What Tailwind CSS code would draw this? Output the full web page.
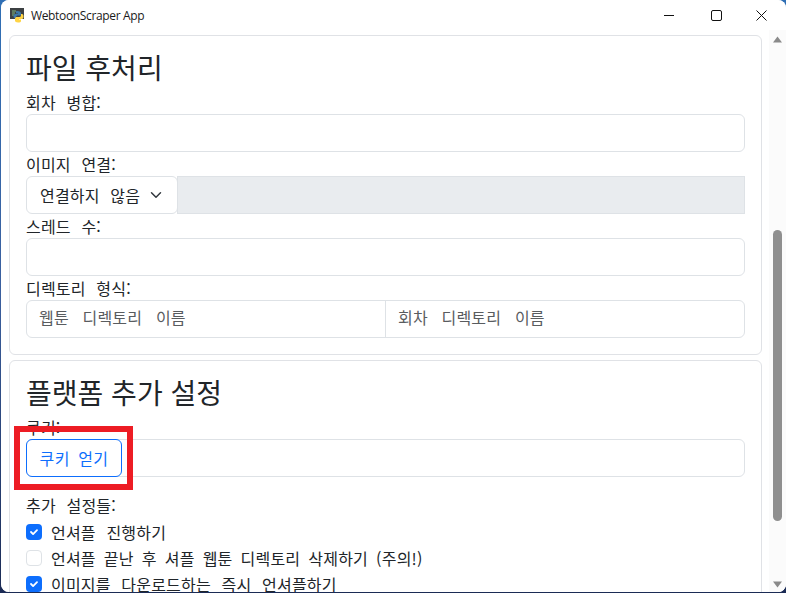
<!DOCTYPE html>
<html lang="ko">
<head>
  <meta charset="UTF-8" />
  <title>WebtoonScraper App</title>
  <script src="https://cdn.jsdelivr.net/npm/@tailwindcss/browser@4"></script>
</head>
<body class="w-[786px] h-[593px] overflow-hidden bg-gradient-to-b from-[#2f6fb5] via-[#3a5f9e] to-[#1b2b55] font-['Noto_Sans_CJK_KR','Noto_Sans',sans-serif] text-[16px] text-[#212529] tracking-[.2px] [word-spacing:6px]">

  <div class="relative w-[785px] h-[592px] ml-px rounded-t-[8px] rounded-b-[8px] bg-[#f3f3f3] overflow-hidden flex flex-col">

    <!-- title bar -->
    <header class="h-[30px] shrink-0 flex items-center bg-white">
      <svg class="ml-[9px] mt-px" width="15" height="15" viewBox="0 0 15 15">
        <rect x="0" y="0" width="14" height="11" fill="#3c4043"/>
        <path d="M2 3h4M2 5h3M2 7h2" stroke="#7fb77e" stroke-width="1"/>
        <path d="M7 3c3 0 4 1 4 2.500v2H8c-1 0-2 .5-2 2v1H5c-1 0-1.500-1-1.500-2.500S4.500 6 5.500 6H8V5.500H6V4c0-.7.300-1 1-1z" fill="#3b78aa"/>
        <path d="M8 14.500c-2 0-3-.7-3-2v-2c0-1 1-1.500 2-1.500h2.500c1 0 1.500-.8 1.500-1.500V6h1c1 0 1.500 1 1.500 2.500S13 11 12 11H9v.5h2V13c0 1-1.200 1.500-3 1.500z" fill="#ffd445"/>
      </svg>
      <span class="ml-[6px] font-['Open_Sans',sans-serif] text-[12px] text-[#1a1a1a] mt-px tracking-[-.35px] [word-spacing:0]">WebtoonScraper App</span>
      <div class="ml-auto flex items-center h-full">
        <svg class="mr-[37px]" width="10" height="10" viewBox="0 0 10 10"><path d="M0 5.500h10" stroke="#111" stroke-width="1"/></svg>
        <svg class="mr-[34px]" width="11" height="11" viewBox="0 0 11 11"><rect x=".5" y=".5" width="10" height="10" rx="1.500" fill="none" stroke="#111" stroke-width="1"/></svg>
        <svg class="mr-[19px]" width="11" height="11" viewBox="0 0 11 11"><path d="M.5.500l10 10M10.500.500l-10 10" stroke="#111" stroke-width="1"/></svg>
      </div>
    </header>

    <div class="flex-1 flex min-h-0 bg-white">
      <!-- scrolled content, cut off by the window -->
      <main class="relative w-[768px] overflow-hidden pl-[8px] pt-[5px] pr-[7px]">

        <section class="h-[320px] border border-[#e0e2e6] rounded-[6px] px-4 pt-4 pb-4 mb-[5px]">
          <h3 class="h-[38px] text-[28px] leading-[30px] tracking-normal [word-spacing:0]">파일 후처리</h3>
          <label class="block h-6 leading-6">회차 병합:</label>
          <div class="h-[38px] border border-[#dee2e6] rounded-[6px]"></div>
          <label class="block h-6 leading-6">이미지 연결:</label>
          <div class="flex h-[38px]">
            <div class="w-[152px] flex items-center border border-[#dee2e6] rounded-[6px] pl-[13px] bg-white">
              <span>연결하지 않음</span>
              <svg class="ml-[10px]" width="12" height="12" viewBox="0 0 16 16"><path d="M2 5l6 6 6-6" fill="none" stroke="#343a40" stroke-width="2" stroke-linecap="round" stroke-linejoin="round"/></svg>
            </div>
            <div class="flex-1 -ml-px bg-[#e9ecef] border border-[#dee2e6]"></div>
          </div>
          <label class="block h-6 leading-6">스레드 수:</label>
          <div class="h-[38px] border border-[#dee2e6] rounded-[6px]"></div>
          <label class="block h-6 leading-6">디렉토리 형식:</label>
          <div class="flex h-[38px] border border-[#dee2e6] rounded-[6px] text-[#595c5f] [word-spacing:9px]">
            <div class="w-[359px] border-r border-[#dee2e6] pl-3 leading-[32px]">웹툰 디렉토리 이름</div>
            <div class="flex-1 pl-3 leading-[32px]">회차 디렉토리 이름</div>
          </div>
        </section>

        <section class="border border-[#e0e2e6] rounded-[6px] px-4 pt-4 h-[260px]">
          <h3 class="h-[38px] text-[28px] leading-[30px] tracking-normal [word-spacing:0]">플랫폼 추가 설정</h3>
          <label class="block h-6 leading-6">쿠키:</label>
          <div class="relative h-[38px] border border-[#dee2e6] rounded-[6px] mb-4">
            <button class="absolute -left-px -top-px h-[38px] w-[96px] border border-[#0d6efd] rounded-[6px] bg-white text-[#0d6efd] tracking-[.4px] [word-spacing:3.5px]">쿠키 얻기</button>
          </div>
          <label class="block h-6 leading-6 mb-[2px]">추가 설정들:</label>
          <div class="flex items-center h-[26px]">
            <span class="w-4 h-4 rounded-[4px] bg-[#0d6efd] flex items-center justify-center">
              <svg width="12" height="12" viewBox="0 0 20 20"><path d="M5 10l3.500 3.500L15 7" fill="none" stroke="#fff" stroke-width="3" stroke-linecap="round" stroke-linejoin="round"/></svg>
            </span>
            <span class="ml-[9px]">언셔플 진행하기</span>
          </div>
          <div class="flex items-center h-[26px]">
            <span class="w-4 h-4 rounded-[4px] border border-[#dee2e6] bg-white"></span>
            <span class="ml-[9px] [word-spacing:3.4px]">언셔플 끝난 후 셔플 웹툰 디렉토리 삭제하기 (주의!)</span>
          </div>
          <div class="flex items-center h-[26px]">
            <span class="w-4 h-4 rounded-[4px] bg-[#0d6efd] flex items-center justify-center">
              <svg width="12" height="12" viewBox="0 0 20 20"><path d="M5 10l3.500 3.500L15 7" fill="none" stroke="#fff" stroke-width="3" stroke-linecap="round" stroke-linejoin="round"/></svg>
            </span>
            <span class="ml-[9px]">이미지를 다운로드하는 즉시 언셔플하기</span>
          </div>
        </section>

        <!-- red highlight drawn over the screenshot -->
        <div class="absolute left-[13px] top-[396px] w-[119px] h-[64px] border-[6px] border-[#ed1c24]"></div>
      </main>

      <!-- scrollbar -->
      <aside class="w-[17px] flex flex-col items-center bg-[#fbfbfb]">
        <svg class="mt-[6px]" width="9" height="7" viewBox="0 0 9 7"><path d="M4.500 0.500L9 6.500H0z" fill="#8a8a8a"/></svg>
        <div class="w-[9px] h-[291px] mt-[187px] rounded-full bg-[#8f8f8f]"></div>
        <svg class="mt-[60px]" width="9" height="7" viewBox="0 0 9 7"><path d="M4.500 6.500L9 .500H0z" fill="#8a8a8a"/></svg>
      </aside>
    </div>
  </div>
</body>
</html>
